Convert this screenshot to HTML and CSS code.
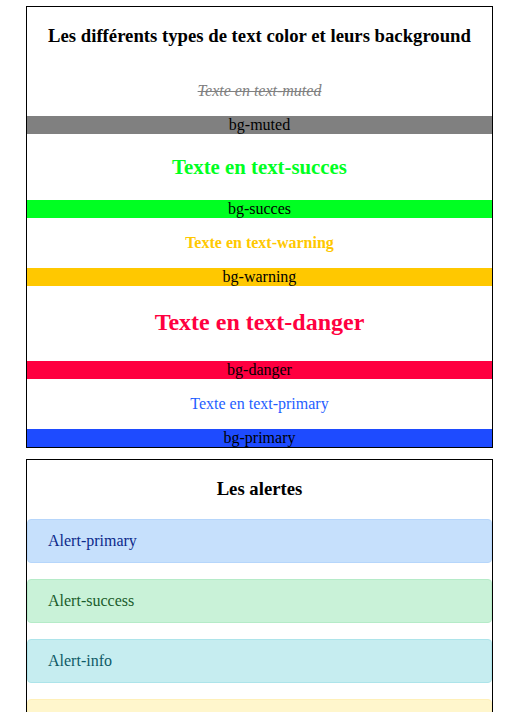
FILE: index.html
```html
<!DOCTYPE html>
<html lang="fr">
<head>
<meta charset="utf-8">
<title>Couleurs et alertes</title>
<link rel="stylesheet" href="styles.css">
</head>
<body>
<main class="page">
  <section class="box">
    <h3 class="box-title">Les différents types de text color et leurs background</h3>
    <p class="t t-muted">Texte en text-muted</p>
    <div class="bar bg-muted">bg-muted</div>
    <h3 class="t t-succes">Texte en text-succes</h3>
    <div class="bar bg-succes">bg-succes</div>
    <p class="t t-warning">Texte en text-warning</p>
    <div class="bar bg-warning">bg-warning</div>
    <h2 class="t t-danger">Texte en text-danger</h2>
    <div class="bar bg-danger">bg-danger</div>
    <p class="t t-primary">Texte en text-primary</p>
    <div class="bar bg-primary">bg-primary</div>
  </section>
  <section class="box">
    <h3 class="box-title">Les alertes</h3>
    <div class="alert alert-primary">Alert-primary</div>
    <div class="alert alert-success">Alert-success</div>
    <div class="alert alert-info">Alert-info</div>
    <div class="alert alert-warning">Alert-warning</div>
    <div class="alert alert-danger">Alert-danger</div>
  </section>
</main>
</body>
</html>
```
FILE: styles.css
```css
html, body {
  margin: 0;
  padding: 0;
  background: #fff;
}
body {
  font-family: "Liberation Serif", "Times New Roman", serif;
  font-size: 16px;
  color: #000;
}
.page {
  padding: 6px 0 0 26px;
  display: flex;
  flex-direction: column;
  gap: 11px;
}
.box {
  width: 467px;
  box-sizing: border-box;
  border: 1px solid #000;
  display: flex;
  flex-direction: column;
}
.box-title {
  margin: 18px 0 19px;
  font-size: 18.72px;
  font-weight: bold;
  text-align: center;
}
.t {
  text-align: center;
  margin: 16px 0;
}
.t-muted {
  color: #808080;
  font-style: italic;
  text-decoration: line-through;
}
.t-succes {
  color: #00ff22;
  font-size: 20.8px;
  font-weight: bold;
  margin: 21px 0 21px;
}
.t-warning {
  color: #ffc800;
  font-weight: bold;
}
.t-danger {
  color: #ff0040;
  font-size: 24px;
  font-weight: bold;
  margin: 23px 0 25px;
}
.t-primary {
  color: #1e5eff;
}
.bar {
  text-align: center;
  height: 18px;
  line-height: 18px;
}
.bg-muted { background: #808080; }
.bg-succes { background: #00ff22; }
.bg-warning { background: #ffc800; }
.bg-danger { background: #ff0040; }
.bg-primary { background: #1e4bff; }
.alert {
  padding: 12px 20px;
  margin-bottom: 16px;
  border: 1px solid transparent;
  border-radius: 4px;
}
.alert-primary {
  color: #0c2a8a;
  background: #c6e0fc;
  border-color: #b6d6fb;
}
.alert-success {
  color: #1a5c2c;
  background: #c9f2d8;
  border-color: #b5ebc8;
}
.alert-info {
  color: #0e5a66;
  background: #c6edf0;
  border-color: #ade4ea;
}
.alert-warning {
  color: #7a5a00;
  background: #fff6cc;
  border-color: #fff0b8;
}
.alert-danger {
  color: #7a1a22;
  background: #f8d7da;
  border-color: #f3c3c8;
}
```
